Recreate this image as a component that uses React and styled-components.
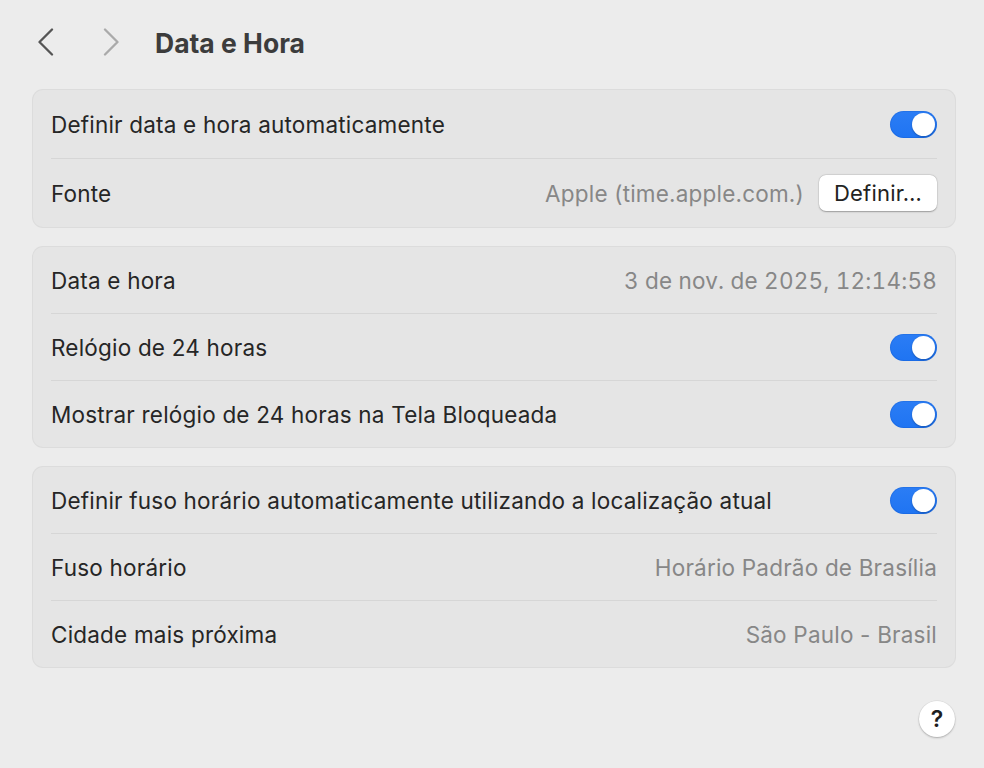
import React from "react";
import styled, { createGlobalStyle } from "styled-components";

const Global = createGlobalStyle`
  html, body { margin: 0; padding: 0; background: #ececec; }
  body { font-family: Inter, "Noto Sans", "Liberation Sans", sans-serif; -webkit-font-smoothing: antialiased; }
`;

const Page = styled.div`
  width: 984px;
  height: 768px;
  box-sizing: border-box;
  padding: 0 29px 0 33px;
  display: flex;
  flex-direction: column;
  background: #ececec;
`;

const Header = styled.div`
  height: 88px;
  display: flex;
  align-items: center;
  padding-bottom: 2px;
  box-sizing: border-box;
`;

const NavButton = styled.button`
  width: 18px;
  height: 28px;
  padding: 0;
  border: 0;
  background: transparent;
  display: flex;
  align-items: center;
  justify-content: center;
  margin-left: ${(p) => p.$ml}px;
  margin-top: -2px;
`;

const Title = styled.h1`
  margin: 0 0 0 35px;
  font-size: 26.5px;
  font-weight: 700;
  color: #3c3c3c;
  letter-spacing: 0;
`;

const Sections = styled.div`
  display: flex;
  flex-direction: column;
  gap: 20px;
  margin-top: 2px;
`;

const Card = styled.div`
  background: #e5e5e5;
  border-radius: 10px;
  box-shadow: 0 0 0 1px #dcdcdc;
  display: flex;
  flex-direction: column;
`;

const Row = styled.div`
  height: ${(p) => (p.$tall ? 68 : 66)}px;
  padding: 0 18px;
  display: flex;
  align-items: center;
  justify-content: space-between;
`;

const Divider = styled.div`
  height: 1px;
  margin: 0 18px;
  background: #d6d6d6;
`;

const Label = styled.span`
  font-size: 22.5px;
  color: #262626;
  letter-spacing: 0.2px;
`;

const Right = styled.div`
  display: flex;
  align-items: center;
  gap: 15px;
`;

const Value = styled.span`
  font-size: 22.5px;
  color: #878787;
  letter-spacing: 0.2px;
  font-variant-numeric: ${(p) => (p.$tabular ? "tabular-nums" : "normal")};
`;

const Button = styled.button`
  height: 36px;
  padding: 0 15px;
  border: 0;
  border-radius: 7px;
  background: #ffffff;
  box-shadow: 0 0.5px 1.5px rgba(0, 0, 0, 0.3), 0 0 0 0.5px rgba(0, 0, 0, 0.06);
  font-family: inherit;
  font-size: 22px;
  letter-spacing: 0.2px;
  color: #222;
`;

const Track = styled.div`
  width: 47px;
  height: 27px;
  border-radius: 14px;
  background: linear-gradient(#2b7df5, #1f74f2);
  box-shadow: inset 0 0 0 1px rgba(0, 60, 160, 0.15);
  position: relative;
  flex-shrink: 0;
`;

const Knob = styled.div`
  position: absolute;
  top: 2px;
  right: 2px;
  width: 23px;
  height: 23px;
  border-radius: 50%;
  background: #fff;
  box-shadow: 0 1px 2px rgba(0, 0, 0, 0.25);
`;

const Footer = styled.div`
  flex: 1;
  display: flex;
  justify-content: flex-end;
  align-items: flex-end;
  padding: 0 0 31px;
`;

const Help = styled.button`
  width: 36px;
  height: 36px;
  border-radius: 50%;
  border: 0;
  background: #fff;
  box-shadow: 0 1px 2px rgba(0, 0, 0, 0.25), 0 0 0 0.5px rgba(0, 0, 0, 0.08);
  font-family: inherit;
  font-size: 23px;
  font-weight: 600;
  color: #1e1e1e;
  display: flex;
  align-items: center;
  justify-content: center;
  padding: 0;
`;

const Toggle = () => (
  <Track>
    <Knob />
  </Track>
);

const Chevron = ({ dir, color }) => (
  <svg width="18" height="28" viewBox="0 0 18 28">
    <polyline
      points={dir === "left" ? "15,1.5 2.5,14 15,26.5" : "3,1.5 15.5,14 3,26.5"}
      fill="none"
      stroke={color}
      strokeWidth="2.3"
      strokeLinecap="round"
      strokeLinejoin="round"
    />
  </svg>
);

export default function App() {
  return (
    <>
      <Global />
      <Page>
        <Header>
          <NavButton $ml={4}>
            <Chevron dir="left" color="#555" />
          </NavButton>
          <NavButton $ml={47}>
            <Chevron dir="right" color="#aaa" />
          </NavButton>
          <Title>Data e Hora</Title>
        </Header>
        <Sections>
          <Card>
            <Row $tall>
              <Label>Definir data e hora automaticamente</Label>
              <Toggle />
            </Row>
            <Divider />
            <Row $tall>
              <Label>Fonte</Label>
              <Right>
                <Value>Apple (time.apple.com.)</Value>
                <Button>Definir…</Button>
              </Right>
            </Row>
          </Card>
          <Card>
            <Row>
              <Label>Data e hora</Label>
              <Value $tabular>3 de nov. de 2025, 12:14:58</Value>
            </Row>
            <Divider />
            <Row>
              <Label>Relógio de 24 horas</Label>
              <Toggle />
            </Row>
            <Divider />
            <Row>
              <Label>Mostrar relógio de 24 horas na Tela Bloqueada</Label>
              <Toggle />
            </Row>
          </Card>
          <Card>
            <Row>
              <Label>Definir fuso horário automaticamente utilizando a localização atual</Label>
              <Toggle />
            </Row>
            <Divider />
            <Row>
              <Label>Fuso horário</Label>
              <Value>Horário Padrão de Brasília</Value>
            </Row>
            <Divider />
            <Row>
              <Label>Cidade mais próxima</Label>
              <Value>São Paulo - Brasil</Value>
            </Row>
          </Card>
        </Sections>
        <Footer>
          <Help>?</Help>
        </Footer>
      </Page>
    </>
  );
}
